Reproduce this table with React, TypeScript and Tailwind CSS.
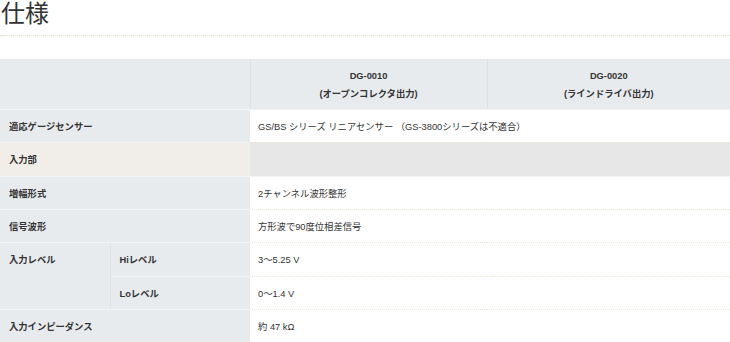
import React from "react";

const font = { fontFamily: '"Liberation Sans", "Noto Sans CJK JP", sans-serif' };

const Label = ({ children, className = "pt-[4px]", colSpan, rowSpan }: { children?: React.ReactNode; className?: string; colSpan?: number; rowSpan?: number }) => (
  <td
    colSpan={colSpan}
    rowSpan={rowSpan}
    className={`bg-[#e8ebee] border-b border-[#f3f4f6] pl-[9px] text-[9.3px] font-bold text-[#333] align-middle ${className}`}
  >
    {children}
  </td>
);

const Val = ({ children }: { children?: React.ReactNode }) => (
  <td colSpan={2} className="bg-white border-b border-dotted border-[#ece4d6] pl-[8px] pt-[4px] text-[9.3px] text-[#333] align-middle">
    {children}
  </td>
);

export default function App() {
  return (
    <div className="w-[730px] h-[342px] overflow-hidden bg-white" style={font}>
      <h2 className="text-[24px] leading-[28px] text-[#333] font-normal pt-0 pl-[1px] h-[36px] border-b border-dotted border-[#e6dccb]">
        仕様
      </h2>
      <div className="h-[23px]" />
      <table className="w-[730px] table-fixed border-collapse">
        <colgroup>
          <col className="w-[110px]" />
          <col className="w-[140px]" />
          <col className="w-[237px]" />
          <col className="w-[243px]" />
        </colgroup>
        <tbody>
          <tr className="h-[50px]">
            <td colSpan={2} className="bg-[#e8ebee] border-b border-[#f3f4f6] border-r border-r-[#dde1e5]" />
            <td className="bg-[#e8ebee] border-b border-[#f3f4f6] border-r border-r-[#dde1e5] text-center text-[9.3px] font-bold text-[#333] leading-[18px] pt-[3px]">
              DG-0010
              <br />
              (オープンコレクタ出力)
            </td>
            <td className="bg-[#e8ebee] border-b border-[#f3f4f6] text-center text-[9.3px] font-bold text-[#333] leading-[18px] pt-[3px]">
              DG-0020
              <br />
              (ラインドライバ出力)
            </td>
          </tr>
          <tr className="h-[33px]">
            <Label colSpan={2}>適応ゲージセンサー</Label>
            <Val>GS/BS シリーズ リニアセンサー （GS-3800シリーズは不適合）</Val>
          </tr>
          <tr className="h-[34px]">
            <td colSpan={2} className="bg-[#f1eee9] border-b border-[#f3f4f6] pl-[9px] pt-[4px] text-[9.3px] font-bold text-[#333]">
              入力部
            </td>
            <td colSpan={2} className="bg-[#e7e7e7] border-b border-[#f3f4f6]" />
          </tr>
          <tr className="h-[33px]">
            <Label colSpan={2}>増幅形式</Label>
            <Val>2チャンネル波形整形</Val>
          </tr>
          <tr className="h-[33px]">
            <Label colSpan={2}>信号波形</Label>
            <Val>方形波で90度位相差信号</Val>
          </tr>
          <tr className="h-[34px]">
            <Label rowSpan={2} className="align-top pt-[11px] border-r border-r-[#dde1e5]">入力レベル</Label>
            <Label>Hiレベル</Label>
            <Val>3～5.25 V</Val>
          </tr>
          <tr className="h-[33px]">
            <Label>Loレベル</Label>
            <Val>0～1.4 V</Val>
          </tr>
          <tr className="h-[33px]">
            <Label colSpan={2}>入力インピーダンス</Label>
            <Val>約 47 kΩ</Val>
          </tr>
        </tbody>
      </table>
    </div>
  );
}
